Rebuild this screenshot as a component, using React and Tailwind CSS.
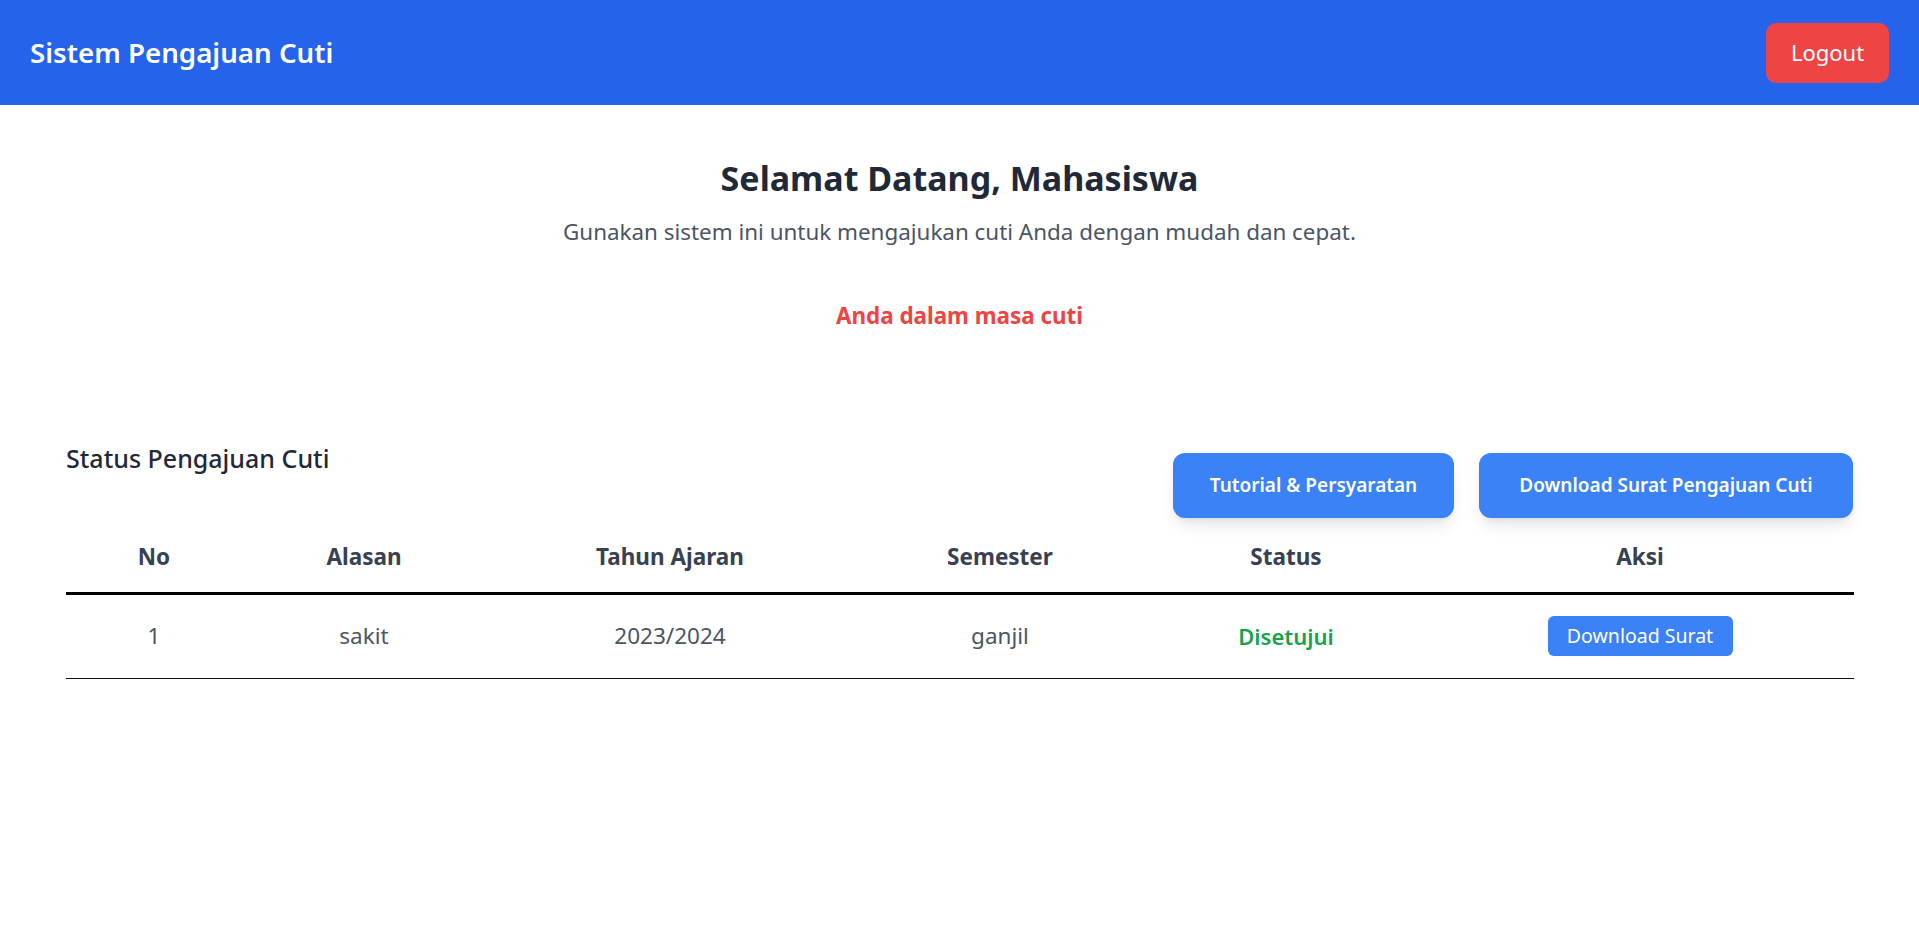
import { useState } from "react";

const rows = [
  { no: 1, alasan: "sakit", tahun: "2023/2024", semester: "ganjil", status: "Disetujui" },
];

const App = () => {
  const [data] = useState(rows);

  return (
    <div className="min-h-screen bg-white font-['Noto_Sans',sans-serif]">
      {/* Navbar */}
      <nav className="h-[105px] bg-[#2563eb] flex items-center justify-between px-[30px]">
        <h1 className="text-[27.7px] font-semibold text-white">Sistem Pengajuan Cuti</h1>
        <button className="w-[123px] h-[60px] rounded-[10px] bg-[#ef4444] text-[22px] text-white">
          Logout
        </button>
      </nav>

      <main className="px-[66px]">
        {/* Welcome */}
        <div className="text-center pt-[50px]">
          <h2 className="text-[34px] leading-[46px] font-bold text-[#1f2937]">
            Selamat Datang, Mahasiswa
          </h2>
          <p className="mt-[15px] text-[22.4px] leading-[32px] text-[#4b5563]">
            Gunakan sistem ini untuk mengajukan cuti Anda dengan mudah dan cepat.
          </p>
          <p className="mt-[53px] text-[22.4px] leading-[30px] font-bold text-[#ef4444]">
            Anda dalam masa cuti
          </p>
        </div>

        {/* Status */}
        <div className="mt-[110px] flex justify-between items-start">
          <h3 className="text-[25px] leading-[34px] font-medium text-[#1f2937]">
            Status Pengajuan Cuti
          </h3>
          <div className="flex gap-[25px] mt-[12px]">
            <button className="w-[281px] h-[65px] rounded-[12px] bg-[#3b82f6] text-[19px] font-semibold text-white shadow-lg">
              Tutorial &amp; Persyaratan
            </button>
            <button className="w-[374px] h-[65px] rounded-[12px] bg-[#3b82f6] text-[19px] font-semibold text-white shadow-lg">
              Download Surat Pengajuan Cuti
            </button>
          </div>
        </div>

        <table className="w-full mt-[5px] border-collapse table-fixed">
          <colgroup>
            <col className="w-[176px]" />
            <col className="w-[244px]" />
            <col className="w-[368px]" />
            <col className="w-[292px]" />
            <col className="w-[280px]" />
            <col className="w-[428px]" />
          </colgroup>
          <thead>
            <tr className="border-b-[3px] border-black">
              {["No", "Alasan", "Tahun Ajaran", "Semester", "Status", "Aksi"].map((h) => (
                <th key={h} className="h-[70px] text-[22.5px] font-bold text-[#374151] text-center">
                  {h}
                </th>
              ))}
            </tr>
          </thead>
          <tbody>
            {data.map((r) => (
              <tr key={r.no} className="border-b border-[#111]">
                <td className="h-[85px] text-center text-[22.5px] text-[#4b5563]">{r.no}</td>
                <td className="text-center text-[22.5px] text-[#4b5563]">{r.alasan}</td>
                <td className="text-center text-[22.5px] text-[#4b5563]">{r.tahun}</td>
                <td className="text-center text-[22.5px] text-[#4b5563]">{r.semester}</td>
                <td className="text-center text-[22px] font-semibold text-[#16a34a]">{r.status}</td>
                <td className="text-center">
                  <button className="w-[185px] h-[40px] rounded-[6px] bg-[#3b82f6] text-[19.5px] text-white">
                    Download Surat
                  </button>
                </td>
              </tr>
            ))}
          </tbody>
        </table>
      </main>
    </div>
  );
};

export default App;
